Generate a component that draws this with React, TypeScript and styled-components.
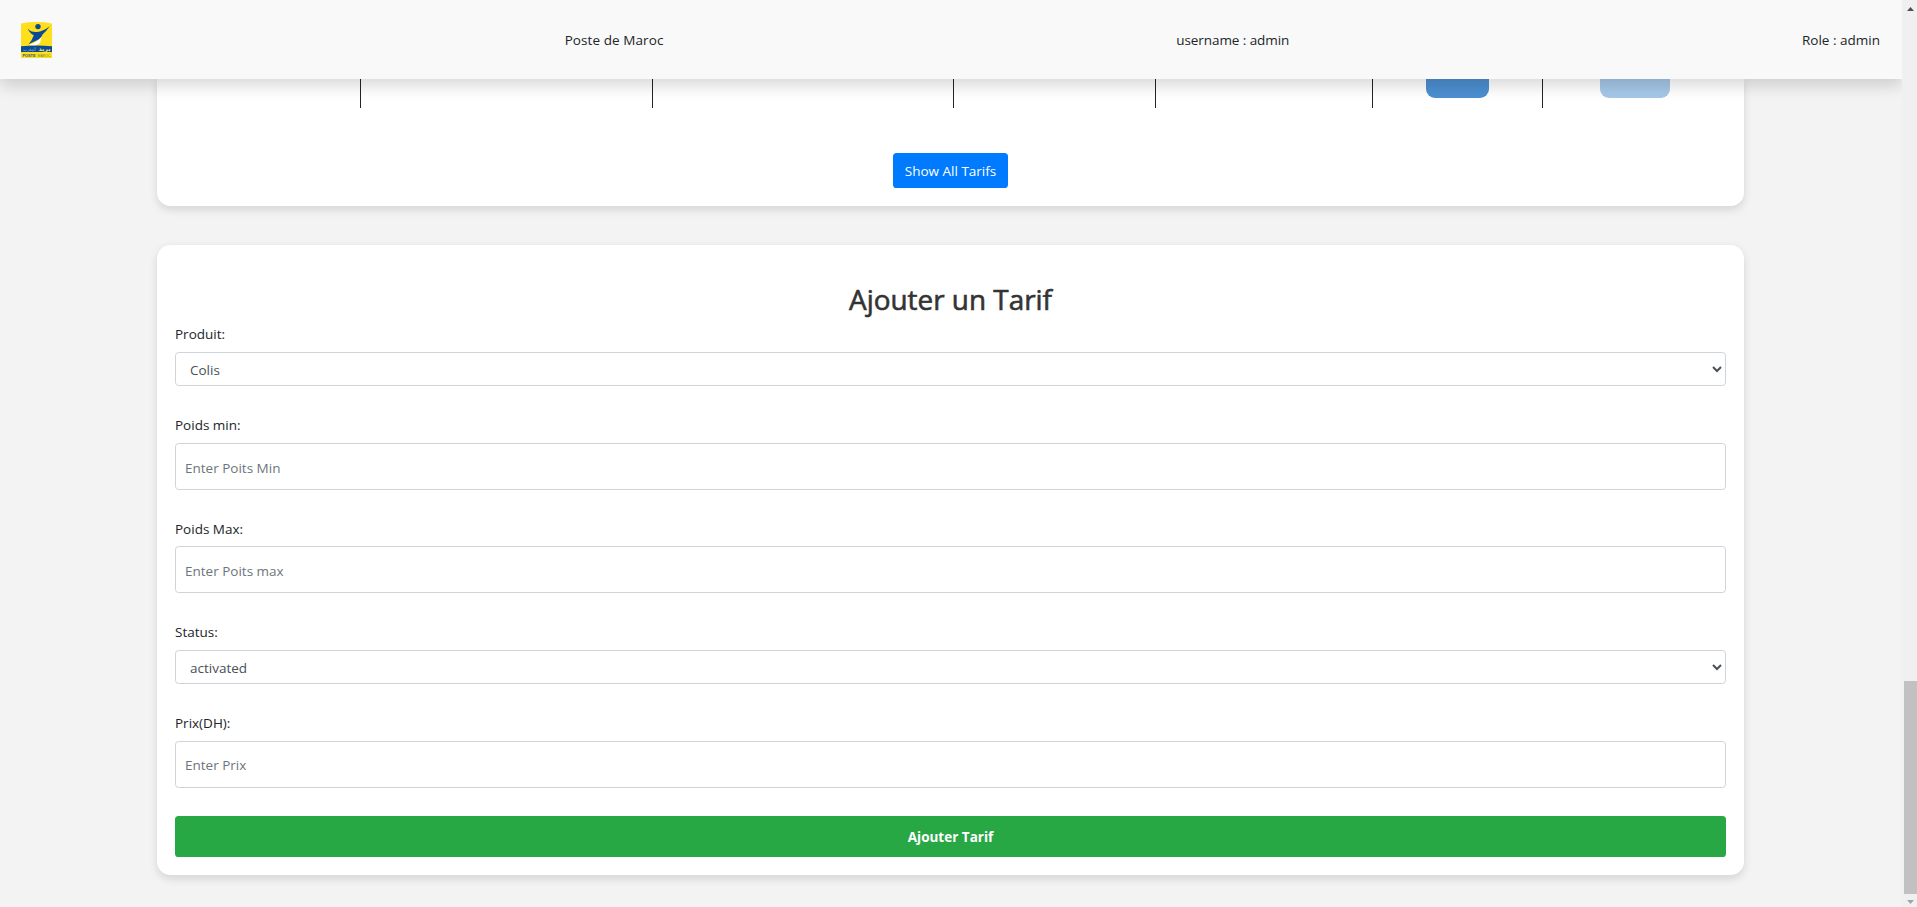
import React from "react";
import styled, { createGlobalStyle } from "styled-components";

const GlobalStyle = createGlobalStyle`
  *, *::before, *::after { box-sizing: border-box; }
  html, body { margin: 0; padding: 0; overflow: hidden; }
  body {
    font-family: "Segoe UI", "Open Sans", "Noto Sans", sans-serif;
    font-size: 14.4px;
    line-height: 21.6px;
    color: #212529;
    background: #f3f3f3;
  }
`;

const Shell = styled.div`
  display: flex;
  width: 100%;
  height: 907px;
  overflow: hidden;
`;

const Page = styled.div`
  flex: 1;
  min-width: 0;
  display: flex;
  flex-direction: column;
  overflow: hidden;
`;

const Header = styled.header`
  position: relative;
  z-index: 2;
  flex: none;
  height: 79px;
  padding: 1px 22px 0 21px;
  display: flex;
  align-items: center;
  justify-content: space-between;
  background: #f9f9f9;
  box-shadow: 0 7.2px 14.4px rgba(0, 0, 0, 0.15);
`;

const Logo = styled.svg`
  display: block;
  width: 31px;
  height: 36px;
`;

const HeaderItem = styled.span<{ $w: number; $tracking?: number }>`
  display: block;
  width: ${(p) => p.$w}px;
  padding-top: 1px;
  font-size: 13.5px;
  letter-spacing: ${(p) => p.$tracking ?? 0}px;
  white-space: nowrap;
`;

const Main = styled.main`
  display: flex;
  flex-direction: column;
  align-items: center;
  gap: 39px;
  padding-right: 1px;
`;

const Card = styled.section<{ $continued?: boolean }>`
  width: 1587px;
  padding: ${(p) => (p.$continued ? "0 18px 18px" : "37px 18px 18px")};
  border-radius: ${(p) => (p.$continued ? "0 0 13.5px 13.5px" : "13.5px")};
  background: #fff;
  box-shadow: 0 3.6px 9px rgba(0, 0, 0, 0.12);
`;

const LastRow = styled.div`
  display: grid;
  grid-template-columns: 186px 292px 301px 202px 217px 170px 1fr;
  height: 29px;
  margin-bottom: 45px;
`;

const Cell = styled.div`
  display: flex;
  justify-content: center;
  border-right: 1px solid #212529;
  &:last-child { border-right: 0; padding-left: 1px; }
`;

const ActionEnd = styled.div<{ $w: number; $color: string }>`
  width: ${(p) => p.$w}px;
  height: 19px;
  border-radius: 0 0 9px 9px;
  background: ${(p) => p.$color};
`;

const ShowAll = styled.button`
  display: block;
  width: 115px;
  height: 35px;
  margin: 0 auto;
  padding: 2px 0 0;
  border: 0;
  border-radius: 3.6px;
  background: #007bff;
  color: #fff;
  font: 13.5px/21.6px "Segoe UI", "Open Sans", sans-serif;
`;

const Title = styled.h2`
  margin: 0 0 6px;
  text-align: center;
  font-size: 27.9px;
  line-height: 35px;
  font-weight: 500;
  -webkit-text-stroke: 0.6px #333;
  color: #333;
`;

const Group = styled.div`
  display: flex;
  flex-direction: column;
  margin-bottom: 27.5px;
`;

const Label = styled.label`
  padding-top: 1.3px;
  margin-bottom: 6.2px;
  font-size: 13.5px;
`;

const Form = styled.form`
  display: flex;
  flex-direction: column;
  margin: 0;
  padding-top: 0.2px;
`;

const field = `
  display: block;
  width: 100%;
  border: 1px solid #ced4da;
  border-radius: 3.6px;
  background: #fff;
  color: #495057;
  font: 13.5px/21.6px "Segoe UI", "Open Sans", sans-serif;
`;

const Select = styled.select`
  ${field}
  height: 34.2px;
  padding: 6.4px 1px 4.4px 10px;
`;

const Input = styled.input`
  ${field}
  height: 47px;
  margin-bottom: -0.2px;
  padding: 10px 9px 8px;
  &::placeholder { color: #6c757d; opacity: 1; }
`;

const Submit = styled.button`
  display: block;
  width: 100%;
  height: 41px;
  margin-top: 0.9px;
  padding: 3px 0 0;
  border: 0;
  border-radius: 3.6px;
  background: #28a745;
  color: #fff;
  font: 700 13.5px/21.6px "Segoe UI", "Open Sans", sans-serif;
`;

const ScrollTrack = styled.div`
  flex: none;
  width: 15px;
  display: flex;
  flex-direction: column;
  align-items: flex-end;
  background: #f0f0f0;
`;

const ScrollArrow = styled.svg`
  display: block;
  width: 15px;
  height: 13px;
`;

const ScrollThumb = styled.div`
  width: 13px;
  height: 213px;
  margin-top: auto;
  background: #c1c1c1;
`;

const PosteLogo = () => (
  <Logo viewBox="0 0 31 36">
    <path d="M0 1.4Q15.5-1.4 31 1.4V36H0Z" fill="#ffdf1b" />
    <path d="M7.5 23Q17 20.5 21 13.5L19 21L14 24Z" fill="#fff" />
    <path d="M0 24.3Q15.5 22.5 31 24.3V30H0Z" fill="#0b4a94" />
    <circle cx="17" cy="4.6" r="2.7" fill="#0b4a94" />
    <path d="M6.5 6.5Q10 10.5 16 10Q22 9.5 28.7 4.2Q25 9.5 21.5 12.5Q20.5 16 15.5 18.5Q11 20.5 7.5 22.5Q11 18.5 12.8 13.2Q9 11.5 6.5 6.5Z" fill="#0b4a94" />
    <text x="29.5" y="28.7" textAnchor="end" fontSize="6" fontWeight="700" fill="#f3e45c" fontFamily="DejaVu Sans, sans-serif" textLength="12" lengthAdjust="spacingAndGlyphs">بريد</text>
    <text x="15" y="28.5" textAnchor="end" fontSize="5" fill="#8fa9bd" fontFamily="DejaVu Sans, sans-serif" textLength="13" lengthAdjust="spacingAndGlyphs">المغرب</text>
    <text x="1.5" y="34.5" fontSize="3.8" fontWeight="700" fill="#26568b" fontFamily="Liberation Sans, sans-serif" textLength="13" lengthAdjust="spacingAndGlyphs">POSTE</text>
    <text x="16.5" y="34.5" fontSize="3.8" fill="#6c7c5c" fontFamily="Liberation Sans, sans-serif" textLength="13" lengthAdjust="spacingAndGlyphs">MAROC</text>
  </Logo>
);

export default function App() {
  return (
    <>
      <GlobalStyle />
      <Shell>
        <Page>
          <Header>
            <PosteLogo />
            <HeaderItem $w={99} $tracking={0.08}>Poste de Maroc</HeaderItem>
            <HeaderItem $w={113} $tracking={-0.08}>username : admin</HeaderItem>
            <HeaderItem $w={78}>Role : admin</HeaderItem>
          </Header>
          <Main>
            <Card $continued>
              <LastRow>
                <Cell /><Cell /><Cell /><Cell /><Cell />
                <Cell><ActionEnd $w={63} $color="#4d8fd1" /></Cell>
                <Cell><ActionEnd $w={70} $color="#a5c7e8" /></Cell>
              </LastRow>
              <ShowAll>Show All Tarifs</ShowAll>
            </Card>
            <Card>
              <Title>Ajouter un Tarif</Title>
              <Form>
                <Group>
                  <Label htmlFor="produit">Produit:</Label>
                  <Select id="produit"><option>Colis</option></Select>
                </Group>
                <Group>
                  <Label htmlFor="min">Poids min:</Label>
                  <Input id="min" placeholder="Enter Poits Min" />
                </Group>
                <Group>
                  <Label htmlFor="max">Poids Max:</Label>
                  <Input id="max" placeholder="Enter Poits max" />
                </Group>
                <Group>
                  <Label htmlFor="status">Status:</Label>
                  <Select id="status"><option>activated</option></Select>
                </Group>
                <Group>
                  <Label htmlFor="prix">Prix(DH):</Label>
                  <Input id="prix" placeholder="Enter Prix" />
                </Group>
                <Submit type="button">Ajouter Tarif</Submit>
              </Form>
            </Card>
          </Main>
        </Page>
        <ScrollTrack>
          <ScrollArrow viewBox="0 0 15 13"><path d="M5 11L8.5 7L12 11Z" fill="#505050" /></ScrollArrow>
          <ScrollThumb />
          <ScrollArrow viewBox="0 0 15 13"><path d="M5 6L8.5 10L12 6Z" fill="#a3a3a3" /></ScrollArrow>
        </ScrollTrack>
      </Shell>
    </>
  );
}
